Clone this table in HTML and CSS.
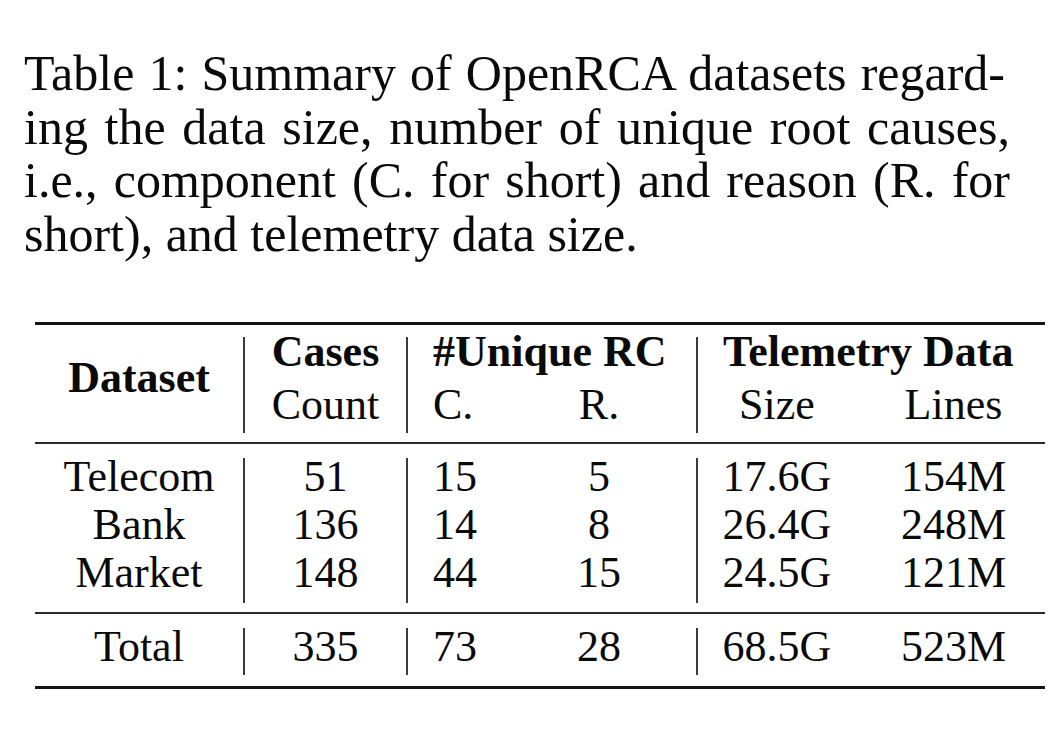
FILE: index.html
```html
<!DOCTYPE html>
<html lang="en">
<head>
<meta charset="utf-8">
<title>Table 1: Summary of OpenRCA datasets</title>
<link rel="stylesheet" href="styles.css">
</head>
<body>
<div class="page">
  <div class="caption">
    <div class="cl first">Table 1: Summary of OpenRCA datasets regard-</div>
    <div class="cl">ing the data size, number of unique root causes,</div>
    <div class="cl">i.e., component (C. for short) and reason (R. for</div>
    <div class="cl last">short), and telemetry data size.</div>
  </div>

  <div class="tbl">
    <div class="blk head">
      <div class="sep s1"></div>
      <div class="sep s2"></div>
      <div class="sep s3"></div>
      <div class="cell bold c-ds rspan">Dataset</div>
      <div class="cell bold c-cases r1">Cases</div>
      <div class="cell bold c-rc r1">#Unique RC</div>
      <div class="cell bold c-tel r1">Telemetry Data</div>
      <div class="cell c-cases r2">Count</div>
      <div class="cell c-c r2">C.</div>
      <div class="cell c-r r2">R.</div>
      <div class="cell c-size r2">Size</div>
      <div class="cell c-lines r2">Lines</div>
    </div>

    <div class="blk body">
      <div class="sep s1"></div>
      <div class="sep s2"></div>
      <div class="sep s3"></div>
      <div class="cell c-ds r1">Telecom</div>
      <div class="cell c-cases r1">51</div>
      <div class="cell c-c r1">15</div>
      <div class="cell c-r r1">5</div>
      <div class="cell c-size r1">17.6G</div>
      <div class="cell c-lines r1">154M</div>

      <div class="cell c-ds r2">Bank</div>
      <div class="cell c-cases r2">136</div>
      <div class="cell c-c r2">14</div>
      <div class="cell c-r r2">8</div>
      <div class="cell c-size r2">26.4G</div>
      <div class="cell c-lines r2">248M</div>

      <div class="cell c-ds r3">Market</div>
      <div class="cell c-cases r3">148</div>
      <div class="cell c-c r3">44</div>
      <div class="cell c-r r3">15</div>
      <div class="cell c-size r3">24.5G</div>
      <div class="cell c-lines r3">121M</div>
    </div>

    <div class="blk total">
      <div class="sep s1"></div>
      <div class="sep s2"></div>
      <div class="sep s3"></div>
      <div class="cell c-ds r1">Total</div>
      <div class="cell c-cases r1">335</div>
      <div class="cell c-c r1">73</div>
      <div class="cell c-r r1">28</div>
      <div class="cell c-size r1">68.5G</div>
      <div class="cell c-lines r1">523M</div>
    </div>
  </div>
</div>
</body>
</html>
```

FILE: styles.css
```css
html, body {
  margin: 0;
  padding: 0;
  background: #ffffff;
}

.page {
  font-family: "Liberation Serif", "Times New Roman", serif;
  color: #0a0a0a;
  padding-top: 47px;
}

/* caption */
.caption {
  margin-left: 24px;
  width: 986px;
  font-size: 50px;
  line-height: 53.7px;
}

.cl {
  text-align: justify;
  text-align-last: justify;
}

.cl.first {
  padding-right: 5px;
}

.cl.last {
  text-align-last: left;
}

/* table */
.tbl {
  margin-top: 60px;
  margin-left: 35px;
  width: 1010px;
  border-top: 3px solid #141414;
  border-bottom: 3px solid #141414;
  font-size: 44px;
}

.blk {
  display: grid;
  grid-template-columns: 208px 2px 161px 2px 145px 92px 51px 2px 158px 189px;
}

.blk + .blk {
  border-top: 2px solid #2a2a2a;
}

.head {
  grid-template-rows: 50px 50px;
  row-gap: 3px;
  padding: 2px 0 12px;
  line-height: 50px;
}

.body {
  grid-template-rows: 48px 48px 48px;
  padding: 9px 0 15px;
  line-height: 48px;
}

.total {
  grid-template-rows: 48px;
  padding: 9px 0 15px;
  line-height: 48px;
}

.sep {
  grid-row: 1 / -1;
  background: #3c3c3c;
}

.s1 { grid-column: 2; }
.s2 { grid-column: 4; }
.s3 { grid-column: 8; }

.head .sep { margin: 10px 0 -3px; }
.body .sep { margin: 5px 0 -6px; }
.total .sep { margin: 5px 0 -4px; }

.cell {
  white-space: nowrap;
}

.bold {
  font-weight: bold;
}

.r1 { grid-row: 1; }
.r2 { grid-row: 2; }
.r3 { grid-row: 3; }
.rspan { grid-row: 1 / 3; align-self: center; }

.c-ds { grid-column: 1; text-align: center; }
.c-cases { grid-column: 3; text-align: center; }
.c-rc { grid-column: 5 / 8; padding-left: 25px; }
.c-c { grid-column: 5; padding-left: 25px; }
.c-r { grid-column: 6; text-align: center; }
.c-tel { grid-column: 9 / 11; padding-left: 25px; }
.c-size { grid-column: 9; text-align: center; }
.c-lines { grid-column: 10; text-align: center; padding-left: 6px; }
```
